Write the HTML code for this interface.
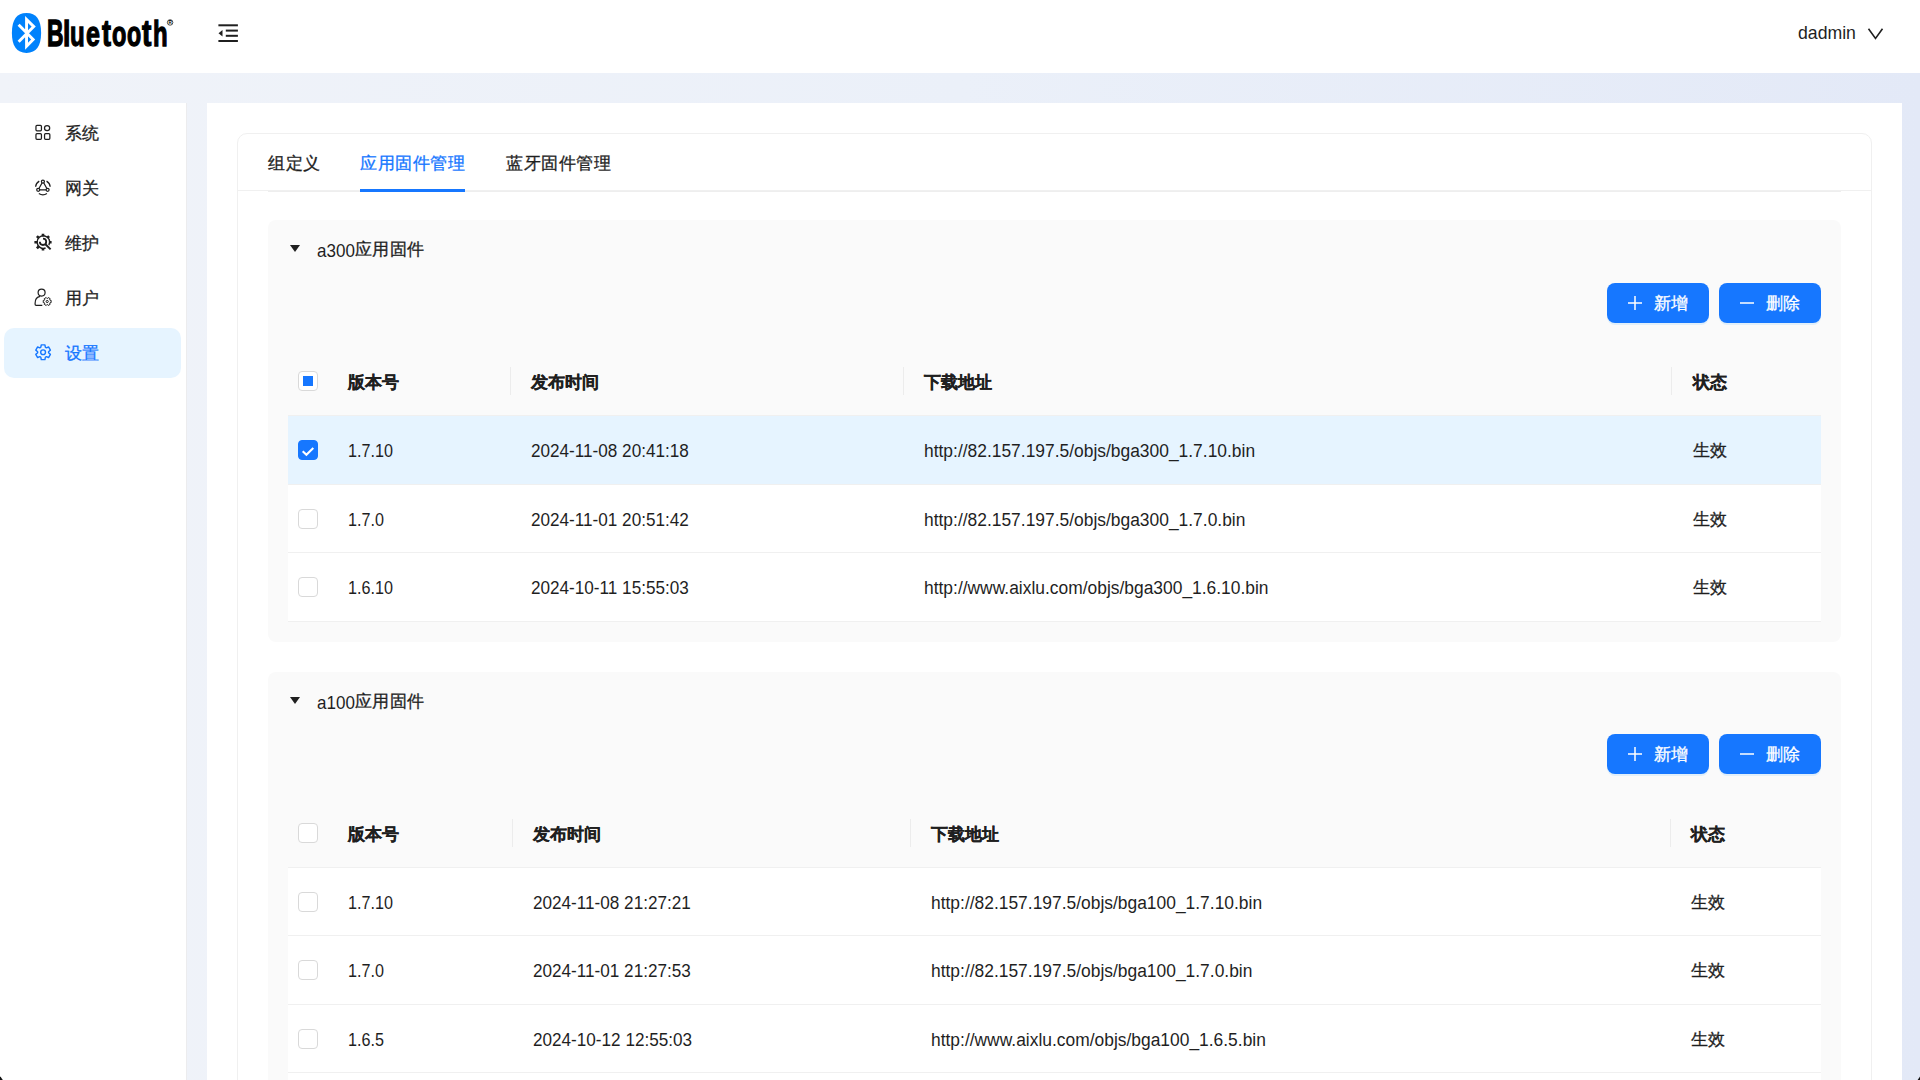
<!DOCTYPE html>
<html><head><meta charset="utf-8">
<style>
*{box-sizing:border-box;margin:0;padding:0}
html,body{width:1920px;height:1080px;overflow:hidden}
body{position:relative;font-family:"Liberation Sans",sans-serif;color:#1f1f1f;background:linear-gradient(90deg,#f0f3f9 0%,#ebf0f9 50%,#e3e9f7 100%)}
.abs{position:absolute}
#hdr{left:0;top:0;width:1920px;height:73px;background:#fff}
#side{left:0;top:103px;width:187px;height:977px;background:#fff;border-right:1px solid #ececee}
#main{left:207px;top:103px;width:1695px;height:977px;background:#fff}
#card{left:237px;top:133px;width:1635px;height:1000px;border:1px solid #f0f0f0;border-radius:10px;background:#fff}
.mi{position:absolute;left:4px;width:177px;height:50px;border-radius:10px}
.mi .t{position:absolute;left:61px;top:1.3px;line-height:50px;font-size:17px;white-space:nowrap}
#bt span{position:absolute;top:13.84px;font-size:38.23px;line-height:38.23px;font-weight:bold;color:#000;-webkit-text-stroke:1.4px #000;transform-origin:0 33px;white-space:nowrap}
.sel{background:#e6f4ff;color:#1677ff}
.cj{-webkit-text-stroke:0.3px currentColor}
.tab{position:absolute;top:133px;line-height:61px;font-size:17px;letter-spacing:0.5px;white-space:nowrap}
.panel{position:absolute;left:268px;width:1573px;background:#fafafa;border-radius:8px}
.ph{position:absolute;left:49px;top:1px;line-height:58px;font-size:17px;white-space:nowrap}
.ph.lt{font-size:18.5px;top:2px;transform:scaleX(0.92);transform-origin:0 0}
.caret{position:absolute;left:22px;top:25px;width:0;height:0;border-left:5.7px solid transparent;border-right:5.7px solid transparent;border-top:7px solid #1f1f1f}
.btn{position:absolute;width:102px;height:40px;background:#1677ff;border-radius:8px;color:#fff;box-shadow:0 2px 0 rgba(5,145,255,.1)}
.btn .t{position:absolute;left:47px;top:1px;line-height:40px;font-size:17px;white-space:nowrap}
.tbl{position:absolute;left:20px;width:1533px}
.th{position:absolute;left:0;width:1533px;height:68px}
.row{position:absolute;left:0;width:1533px;background:#fff;border-top:1px solid #f0f0f0}
.row.on{background:#e6f4ff}
.cell{position:absolute;top:0;white-space:nowrap;font-size:17.4px}
.cell.v,.cell.d,.cell.u{font-size:18.8px;top:0.5px;transform-origin:0 0}
.cell.v{transform:scaleX(0.86)}
.cell.d{transform:scaleX(0.912)}
.cell.u{transform:scaleX(0.927)}
.hcell{position:absolute;top:2px;white-space:nowrap;font-size:17px;font-weight:bold;-webkit-text-stroke:0.25px currentColor}
.div{position:absolute;top:20px;width:1px;height:28px;background:#ececec}
.cb{position:absolute;left:10px;width:20px;height:20px;border:1px solid #d9d9d9;border-radius:4px;background:#fff}
.cb.ind::after{content:"";position:absolute;left:4px;top:4px;width:10px;height:10px;background:#1677ff}
.cb.chk{background:#1677ff;border-color:#1677ff}
</style></head><body>
<div id="hdr" class="abs">
  <svg class="abs" style="left:0;top:0;overflow:visible" width="60" height="60" viewBox="0 0 60 60">
    <path d="M26.5 13.1 C36.4 13.1 41.1 20 41.1 33 C41.1 46 36.4 52.9 26.5 52.9 C16.6 52.9 11.9 46 11.9 33 C11.9 20 16.6 13.1 26.5 13.1 Z" fill="#0082fc"/>
    <path d="M18.65 24.85 L33.15 39.45 L26.55 46.15 L26.55 19.4 L33.75 26.6 L18.65 41.7" fill="none" stroke="#fff" stroke-width="2.9" stroke-linejoin="miter" stroke-miterlimit="10"/>
  </svg>
  <div id="bt"><span style="left:46.69px;transform:scale(0.599,0.955)">B</span><span style="left:62.73px;transform:scale(0.693,0.923)">l</span><span style="left:70.35px;transform:scale(0.629,0.93)">u</span><span style="left:86.48px;transform:scale(0.654,0.92)">e</span><span style="left:101.57px;transform:scale(0.704,0.95)">t</span><span style="left:111.91px;transform:scale(0.615,0.92)">o</span><span style="left:127.22px;transform:scale(0.606,0.92)">o</span><span style="left:142.08px;transform:scale(0.734,0.95)">t</span><span style="left:152.85px;transform:scale(0.625,0.923)">h</span></div>
  <svg class="abs" style="left:0;top:0;overflow:visible" width="1" height="1"><circle cx="170.1" cy="22.45" r="2.75" fill="none" stroke="#000" stroke-width=".7"/><text x="170.1" y="24.1" font-size="4.6" font-family="Liberation Sans" font-weight="bold" text-anchor="middle" fill="#000">R</text></svg>
  <svg class="abs" style="left:217px;top:23px" width="22" height="20" viewBox="0 0 22 20">
    <rect x="1.4" y="1.3" width="19.5" height="2" fill="#1f1f1f"/>
    <rect x="8.8" y="6.6" width="12.1" height="2" fill="#1f1f1f"/>
    <rect x="8.8" y="11.8" width="12.1" height="2" fill="#1f1f1f"/>
    <rect x="1.4" y="17" width="19.5" height="2" fill="#1f1f1f"/>
    <path d="M1.5 10.2 L5.5 6.9 L5.5 13.6 Z" fill="#1f1f1f"/>
  </svg>
  <div class="abs" style="left:1798px;top:-1px;line-height:68px;font-size:18.6px;transform:scaleX(0.95);transform-origin:0 0">dadmin</div>
  <svg class="abs" style="left:1867px;top:27px" width="18" height="14" viewBox="0 0 18 14">
    <path d="M1.5 1.8 L8.5 11.5 L15.5 1.8" fill="none" stroke="#1f1f1f" stroke-width="1.6"/>
  </svg>
</div>

<div id="side" class="abs">
  <div class="mi" style="top:5px"><span class="t cj">系统</span></div>
  <div class="mi" style="top:60px"><span class="t cj">网关</span></div>
  <div class="mi" style="top:115px"><span class="t cj">维护</span></div>
  <div class="mi" style="top:170px"><span class="t cj">用户</span></div>
  <div class="mi sel" style="top:225px"><span class="t cj">设置</span></div>
</div>
<svg class="abs" style="left:0;top:0" width="186" height="400" viewBox="0 0 186 400">
  <g fill="none" stroke="#1f1f1f" stroke-width="1.25">
    <rect x="35.95" y="125.45" width="5.5" height="5.3" rx="1"/>
    <circle cx="47.1" cy="128.1" r="2.6"/>
    <rect x="35.95" y="133.65" width="5.5" height="5.6" rx="1"/>
    <rect x="44.55" y="133.65" width="5.3" height="5.6" rx="1"/>
  </g>
  <g fill="none" stroke="#1f1f1f" stroke-width="1.25">
    <circle cx="42.9" cy="181.5" r="1.5"/><circle cx="38.2" cy="189.8" r="1.5"/><circle cx="47.6" cy="189.8" r="1.5"/>
    <path d="M42.15 182.8 L38.95 188.5 M43.65 182.8 L46.85 188.5 M39.7 189.8 L46.1 189.8"/>
    <path d="M35.62 186.76 A7.3 7.3 0 0 1 39.25 181.08 M46.55 181.08 A7.3 7.3 0 0 1 50.18 186.76 M46.95 193.48 A7.3 7.3 0 0 1 38.85 193.48" stroke-width="1.3"/>
  </g>
  <g fill="none" stroke="#1f1f1f">
    <path d="M48.9 245.2 A6.3 6.3 0 1 0 45.6 248" stroke-width="1.5"/>
    <g stroke-width="2.6">
      <path d="M43 233.8 V236.4 M43 248.2 V250.6 M34.4 242.2 H37 M49 242.2 H51.6 M36.9 236.1 L38.7 237.9 M49.1 236.1 L47.3 237.9 M36.9 248.3 L38.7 246.5"/>
    </g>
    <path d="M39.8 241.8 A3.2 3.2 0 1 0 43 238.6" stroke-width="1.8"/>
    <path d="M45.2 244 L50.6 249.4" stroke-width="2"/>
  </g>
  <g fill="none" stroke="#1f1f1f" stroke-width="1.2">
    <circle cx="41.6" cy="292.6" r="3.5"/>
    <path d="M40.2 296.3 C37 296.8 35.1 299.5 35.1 303.3 L35.1 304.3 Q35.1 305.3 36.1 305.3 L42.3 305.3"/>
    <path d="M49.90 302.82 L51.14 302.63 L51.14 300.37 L49.90 300.18 L49.69 299.82 L50.15 298.65 L48.19 297.52 L47.41 298.51 L46.99 298.51 L46.21 297.52 L44.25 298.65 L44.71 299.82 L44.50 300.18 L43.26 300.37 L43.26 302.63 L44.50 302.82 L44.71 303.18 L44.25 304.35 L46.21 305.48 L46.99 304.49 L47.41 304.49 L48.19 305.48 L50.15 304.35 L49.69 303.18 Z" stroke-width="1" stroke-linejoin="round"/>
    <circle cx="47.2" cy="301.5" r="1.1" stroke-width="1"/>
  </g>
  <g fill="none" stroke="#1677ff" stroke-width="1.4" stroke-linejoin="round">
    <path d="M45.34 347.23 L44.94 344.88 L41.26 344.88 L40.86 347.23 L39.87 347.80 L37.63 346.97 L35.79 350.16 L37.63 351.68 L37.63 352.82 L35.79 354.34 L37.63 357.53 L39.87 356.70 L40.86 357.27 L41.26 359.62 L44.94 359.62 L45.34 357.27 L46.33 356.70 L48.57 357.53 L50.41 354.34 L48.57 352.82 L48.57 351.68 L50.41 350.16 L48.57 346.97 L46.33 347.80 Z"/>
    <circle cx="43.1" cy="352.25" r="2.4"/>
  </g>
</svg>

<div id="main" class="abs"></div>
<div id="card" class="abs"></div>

<div class="tab cj" style="left:268px">组定义</div>
<div class="tab cj" style="left:360px;color:#1677ff">应用固件管理</div>
<div class="tab cj" style="left:506px">蓝牙固件管理</div>
<div class="abs" style="left:238px;top:190px;width:1633px;height:1px;background:#f0f0f0"></div>
<div class="abs" style="left:268px;top:191px;width:1573px;height:1px;background:#eeeeee"></div>
<div class="abs" style="left:360px;top:189px;width:105px;height:3px;background:#1677ff"></div>

<!-- panel 1 -->
<div class="panel" style="top:220px;height:422px">
  <div class="caret"></div><div class="ph lt">a300</div><div class="ph cj" style="left:86.7px;letter-spacing:0.5px">应用固件</div>
  <div class="btn" style="left:1339px;top:63px"><svg class="abs" style="left:20px;top:12px" width="16" height="16" viewBox="0 0 16 16"><path d="M8 1 V15 M1 8 H15" stroke="#fff" stroke-width="1.5"/></svg><span class="t cj">新增</span></div>
  <div class="btn" style="left:1451px;top:63px"><svg class="abs" style="left:20px;top:12px" width="16" height="16" viewBox="0 0 16 16"><path d="M1 8 H15" stroke="#fff" stroke-width="1.5"/></svg><span class="t cj">删除</span></div>
  <div class="tbl" style="top:127px">
    <div class="th" style="top:0">
      <div class="cb ind" style="top:24px"></div>
      <div class="hcell" style="left:60px;line-height:68px">版本号</div>
      <div class="div" style="left:222px"></div>
      <div class="hcell" style="left:243px;line-height:68px">发布时间</div>
      <div class="div" style="left:615px"></div>
      <div class="hcell" style="left:636px;line-height:68px">下载地址</div>
      <div class="div" style="left:1383px"></div>
      <div class="hcell" style="left:1405px;line-height:68px">状态</div>
    </div>
    <div class="row on" style="top:68px;height:69px">
      <div class="cb chk" style="top:24px"><svg class="abs" style="left:2px;top:2px" width="14" height="14" viewBox="0 0 14 14"><path d="M1.7 8.3 L5.4 11.8 L12.3 5" fill="none" stroke="#fff" stroke-width="2.1"/></svg></div>
      <div class="cell v" style="left:60px;line-height:68px">1.7.10</div>
      <div class="cell d" style="left:243px;line-height:68px">2024-11-08 20:41:18</div>
      <div class="cell u" style="left:636px;line-height:68px">http://82.157.197.5/objs/bga300_1.7.10.bin</div>
      <div class="cell cj" style="left:1405px;line-height:68px">生效</div>
    </div>
    <div class="row" style="top:137px;height:68px">
      <div class="cb" style="top:24px"></div>
      <div class="cell v" style="left:60px;line-height:68px">1.7.0</div>
      <div class="cell d" style="left:243px;line-height:68px">2024-11-01 20:51:42</div>
      <div class="cell u" style="left:636px;line-height:68px">http://82.157.197.5/objs/bga300_1.7.0.bin</div>
      <div class="cell cj" style="left:1405px;line-height:68px">生效</div>
    </div>
    <div class="row" style="top:205px;height:70px;border-bottom:1px solid #f0f0f0">
      <div class="cb" style="top:24px"></div>
      <div class="cell v" style="left:60px;line-height:68px">1.6.10</div>
      <div class="cell d" style="left:243px;line-height:68px">2024-10-11 15:55:03</div>
      <div class="cell u" style="left:636px;line-height:68px">http://www.aixlu.com/objs/bga300_1.6.10.bin</div>
      <div class="cell cj" style="left:1405px;line-height:68px">生效</div>
    </div>
  </div>
</div>

<!-- panel 2 -->
<div class="panel" style="top:672px;height:500px">
  <div class="caret"></div><div class="ph lt">a100</div><div class="ph cj" style="left:86.7px;letter-spacing:0.5px">应用固件</div>
  <div class="btn" style="left:1339px;top:62px"><svg class="abs" style="left:20px;top:12px" width="16" height="16" viewBox="0 0 16 16"><path d="M8 1 V15 M1 8 H15" stroke="#fff" stroke-width="1.5"/></svg><span class="t cj">新增</span></div>
  <div class="btn" style="left:1451px;top:62px"><svg class="abs" style="left:20px;top:12px" width="16" height="16" viewBox="0 0 16 16"><path d="M1 8 H15" stroke="#fff" stroke-width="1.5"/></svg><span class="t cj">删除</span></div>
  <div class="tbl" style="top:127px">
    <div class="th" style="top:0">
      <div class="cb" style="top:24px"></div>
      <div class="hcell" style="left:60px;line-height:68px">版本号</div>
      <div class="div" style="left:224px"></div>
      <div class="hcell" style="left:245px;line-height:68px">发布时间</div>
      <div class="div" style="left:622px"></div>
      <div class="hcell" style="left:643px;line-height:68px">下载地址</div>
      <div class="div" style="left:1382px"></div>
      <div class="hcell" style="left:1403px;line-height:68px">状态</div>
    </div>
    <div class="row" style="top:68px;height:68px">
      <div class="cb" style="top:24px"></div>
      <div class="cell v" style="left:60px;line-height:68px">1.7.10</div>
      <div class="cell d" style="left:245px;line-height:68px">2024-11-08 21:27:21</div>
      <div class="cell u" style="left:643px;line-height:68px">http://82.157.197.5/objs/bga100_1.7.10.bin</div>
      <div class="cell cj" style="left:1403px;line-height:68px">生效</div>
    </div>
    <div class="row" style="top:136px;height:69px">
      <div class="cb" style="top:24px"></div>
      <div class="cell v" style="left:60px;line-height:68px">1.7.0</div>
      <div class="cell d" style="left:245px;line-height:68px">2024-11-01 21:27:53</div>
      <div class="cell u" style="left:643px;line-height:68px">http://82.157.197.5/objs/bga100_1.7.0.bin</div>
      <div class="cell cj" style="left:1403px;line-height:68px">生效</div>
    </div>
    <div class="row" style="top:205px;height:68px">
      <div class="cb" style="top:24px"></div>
      <div class="cell v" style="left:60px;line-height:68px">1.6.5</div>
      <div class="cell d" style="left:245px;line-height:68px">2024-10-12 12:55:03</div>
      <div class="cell u" style="left:643px;line-height:68px">http://www.aixlu.com/objs/bga100_1.6.5.bin</div>
      <div class="cell cj" style="left:1403px;line-height:68px">生效</div>
    </div>
    <div class="row" style="top:273px;height:68px"></div>
  </div>
</div>
<svg class="abs" style="left:1912px;top:1072px" width="8" height="8" viewBox="0 0 8 8"><path d="M5.6 8 L8 4.6 L8 8 Z" fill="#111"/></svg>
<svg class="abs" style="left:0;top:1072px" width="8" height="8" viewBox="0 0 8 8"><path d="M0 4.6 L0.8 4.9 L2.8 8 L0 8 Z" fill="#111"/></svg>
</body></html>
